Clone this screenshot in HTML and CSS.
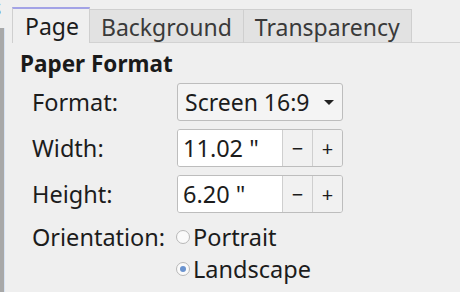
FILE: index.html
```html
<!DOCTYPE html>
<html>
<head>
<meta charset="utf-8">
<link rel="stylesheet" href="styles.css">
</head>
<body>
<div class="edge">
  <div class="frag"><span>S</span></div>
  <div class="bar"></div>
</div>
<div class="main">
  <div class="tabs">
    <div class="tab active">Page</div>
    <div class="tab">Background</div>
    <div class="tab">Transparency</div>
    <div class="tab-fill"></div>
  </div>
  <div class="panel">
    <div class="heading">Paper Format</div>
    <div class="form">
      <div class="label">Format:</div>
      <div class="combo"><span>Screen 16:9</span><span class="arrow"></span></div>
      <div class="label">Width:</div>
      <div class="spin"><div class="entry">11.02 "</div><div class="btn">−</div><div class="btn">+</div></div>
      <div class="label">Height:</div>
      <div class="spin"><div class="entry">6.20 "</div><div class="btn">−</div><div class="btn">+</div></div>
      <div class="label orient">Orientation:</div>
      <div class="radios">
        <div class="radio"><span class="dot"></span>Portrait</div>
        <div class="radio"><span class="dot on"></span>Landscape</div>
      </div>
    </div>
  </div>
</div>
</body>
</html>
```
FILE: styles.css
```css
html, body {
  margin: 0;
  padding: 0;
}
body {
  width: 460px;
  height: 292px;
  overflow: hidden;
  background: #efefef;
  display: flex;
  font-family: "Noto Sans", "Open Sans", sans-serif;
  color: #1c1c1c;
}
.edge {
  width: 5px;
  display: flex;
  flex-direction: column;
}
.frag {
  height: 28px;
  overflow: hidden;
}
.frag span {
  display: block;
  font-size: 18px;
  font-weight: bold;
  line-height: 18px;
  margin-left: -9px;
  color: #222;
}
.bar {
  flex: 1;
  background: #a8a8a8;
  border-right: 1px solid #d6e2f2;
}
.main {
  flex: 1;
  display: flex;
  flex-direction: column;
}
.tabs {
  display: flex;
  align-items: flex-end;
  padding-top: 7px;
  padding-left: 7px;
  height: 43px;
  box-sizing: border-box;
}
.tab {
  font-size: 23px;
  height: 34px;
  box-sizing: border-box;
  line-height: 34px;
  background: #e2e2e2;
  border: 1px solid #cfcfcf;
  border-left: none;
  border-bottom: none;
  color: #3a3a3a;
  padding: 0 11px;
  box-shadow: inset 0 -1px 0 #d2d2d2;
}
.tab.active {
  height: 36px;
  line-height: 35px;
  background: #efefef;
  border-top: 2px solid #a3a3e6;
  border-left: 1px solid #cfcfcf;
  box-shadow: none;
  color: #1c1c1c;
  padding: 0 10px 0 12px;
}
.tab-fill {
  flex: 1;
  border-bottom: 1px solid #d2d2d2;
}
.panel {
  padding: 7px 0 0 15px;
}
.heading {
  font-size: 22.5px;
  font-weight: bold;
  line-height: 28px;
  color: #1a1a1a;
}
.form {
  margin-top: 5px;
  padding-left: 12px;
  display: grid;
  grid-template-columns: 145px 166px;
  row-gap: 8px;
  font-size: 23.5px;
}
.label {
  display: flex;
  align-items: center;
  height: 38px;
}
.combo {
  height: 38px;
  box-sizing: border-box;
  border: 1px solid #bdbdbd;
  border-radius: 3px;
  background: #f4f4f4;
  display: flex;
  align-items: center;
  justify-content: space-between;
  padding: 0 8px 0 7px;
  white-space: nowrap;
  font-size: 23px;
}
.arrow {
  width: 0;
  height: 0;
  border-left: 5px solid transparent;
  border-right: 5px solid transparent;
  border-top: 5px solid #222;
}
.spin {
  height: 38px;
  box-sizing: border-box;
  border: 1px solid #bdbdbd;
  border-radius: 3px;
  display: flex;
  overflow: hidden;
}
.entry {
  width: 104px;
  background: #fff;
  display: flex;
  align-items: center;
  padding-left: 5px;
  box-sizing: border-box;
  white-space: nowrap;
}
.btn {
  flex: 1;
  background: #f1f1f1;
  border-left: 1px solid #cfcfcf;
  display: flex;
  align-items: center;
  justify-content: center;
  font-size: 20px;
}
.label.orient {
  align-self: start;
  height: 32px;
}
.radios {
  display: flex;
  flex-direction: column;
}
.radio {
  height: 32px;
  display: flex;
  align-items: center;
}
.dot {
  width: 14px;
  height: 14px;
  box-sizing: border-box;
  border: 1px solid #b8b8b8;
  border-radius: 50%;
  background: #fafafa;
  margin-right: 3px;
  margin-left: -1px;
  display: flex;
  align-items: center;
  justify-content: center;
}
.dot.on::after {
  content: "";
  width: 6px;
  height: 6px;
  border-radius: 50%;
  background: #6a93cf;
}
```
